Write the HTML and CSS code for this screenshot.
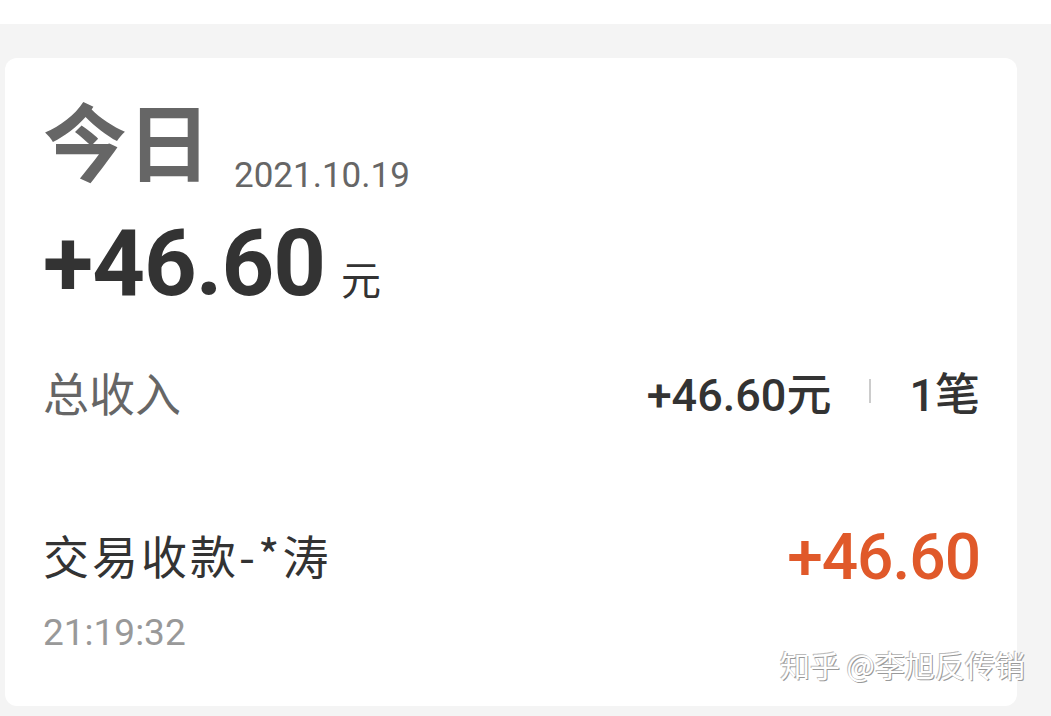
FILE: index.html
```html
<!DOCTYPE html>
<html lang="zh-CN">
<head>
    <meta charset="UTF-8">
    <meta name="viewport" content="width=device-width, initial-scale=1.0">
    <title>今日收入</title>
    <link rel="stylesheet" href="styles.css">
</head>
<body>
    <div class="top-strip"></div>

    <div class="bill-card">
        <div class="day-head">
            <span class="day-title">今日</span>
            <span class="day-date">2021.10.19</span>
        </div>
        <div class="day-total">
            <span class="total-num">+46.60</span>
            <span class="total-unit">元</span>
        </div>

        <div class="summary-row">
            <span class="summary-label">总收入</span>
            <div class="summary-right">
                <span class="summary-amount">+46.60元</span>
                <span class="summary-sep"></span>
                <span class="summary-count">1笔</span>
            </div>
        </div>

        <div class="trade-row">
            <div class="trade-info">
                <div class="trade-name">交易收款-*涛</div>
                <div class="trade-time">21:19:32</div>
            </div>
            <div class="trade-amount">+46.60</div>
        </div>

        <div class="watermark">知乎 @李旭反传销</div>
    </div>
</body>
</html>
```

FILE: styles.css
```css
:root {
    --bg-color: #f4f4f4;
    --text-dark: #333333;
    --text-gray: #666666;
    --text-light: #999999;
    --accent: #e0592a;
}

body {
    margin: 0;
    background: var(--bg-color);
    font-family: Roboto, "Noto Sans CJK SC", sans-serif;
    color: var(--text-dark);
}

.top-strip {
    height: 24px;
    background: #ffffff;
}

.bill-card {
    position: relative;
    margin: 34px 34px 0 5px;
    height: 648px;
    box-sizing: border-box;
    padding: 26px 37px 0 38px;
    background: #ffffff;
    border-radius: 12px;
}

.day-head {
    display: flex;
    align-items: flex-end;
    gap: 23px;
}

.day-title {
    font-family: "Noto Sans CJK SC", sans-serif;
    font-size: 84px;
    font-weight: 700;
    line-height: 110px;
    color: var(--text-gray);
}

.day-date {
    font-size: 35px;
    line-height: 35px;
    margin-bottom: 1px;
    color: var(--text-gray);
}

.day-total {
    display: flex;
    align-items: baseline;
    gap: 16px;
    margin-top: 20px;
}

.total-num {
    font-size: 92px;
    font-weight: 700;
    line-height: 100px;
    letter-spacing: -1px;
}

.total-unit {
    font-family: "Noto Sans CJK SC", sans-serif;
    font-size: 40px;
}

.summary-row {
    display: flex;
    justify-content: space-between;
    align-items: center;
    margin-top: 44px;
}

.summary-label {
    font-family: "Noto Sans CJK SC", sans-serif;
    font-size: 46px;
    color: var(--text-gray);
}

.summary-right {
    display: flex;
    align-items: center;
}

.summary-amount,
.summary-count {
    font-size: 45px;
    font-weight: 500;
}

.summary-sep {
    width: 2px;
    height: 24px;
    margin: 0 38px;
    background: #cccccc;
}

.trade-row {
    display: flex;
    justify-content: space-between;
    align-items: flex-start;
    margin-top: 100px;
}

.trade-name {
    font-family: "Noto Sans CJK SC", sans-serif;
    font-size: 46px;
    line-height: 60px;
    letter-spacing: 3px;
}

.trade-time {
    font-size: 37px;
    color: var(--text-light);
    margin-top: 27px;
}

.trade-amount {
    margin-top: 4px;
    font-size: 64px;
    font-weight: 500;
    line-height: 60px;
    color: var(--accent);
    letter-spacing: -1px;
}

.watermark {
    position: absolute;
    right: -8px;
    bottom: 20px;
    font-family: "Noto Sans CJK SC", sans-serif;
    font-size: 30px;
    color: #ffffff;
    text-shadow: 1px 1px 0 #999999, -1px -1px 0 #bbbbbb;
}
```
